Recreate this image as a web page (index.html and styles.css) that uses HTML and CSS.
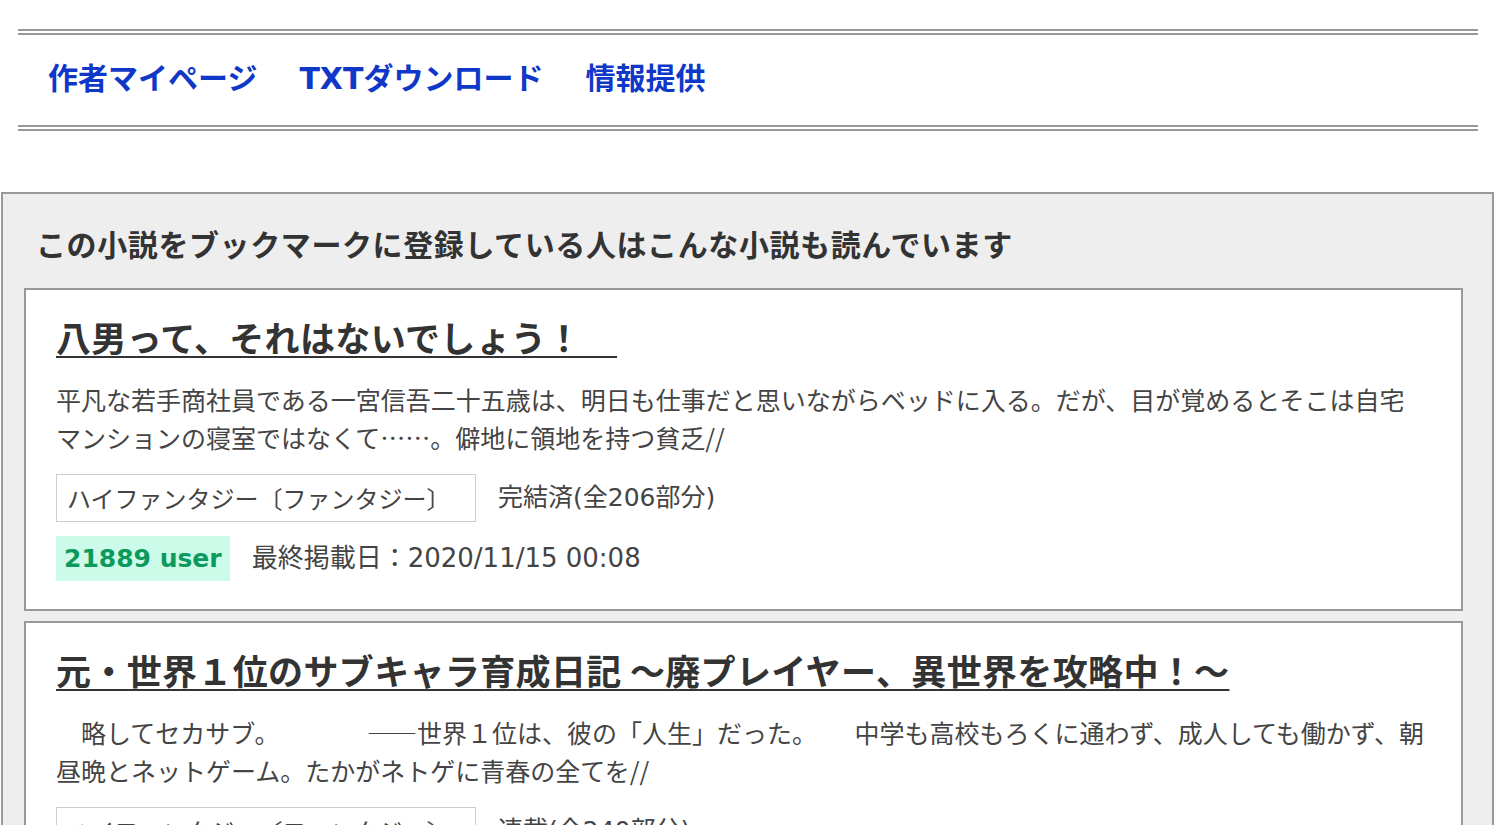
FILE: index.html
```html
<!DOCTYPE html>
<html lang="ja">
<head>
<meta charset="utf-8">
<title>この小説をブックマークに登録している人はこんな小説も読んでいます</title>
<link rel="stylesheet" href="styles.css">
</head>
<body>
<nav class="novel-nav">
  <a class="nav-link" href="#">作者マイページ</a>
  <a class="nav-link" href="#">TXTダウンロード</a>
  <a class="nav-link" href="#">情報提供</a>
</nav>

<section class="recommend">
  <h2 class="recommend-title">この小説をブックマークに登録している人はこんな小説も読んでいます</h2>

  <article class="novel-card">
    <a class="novel-title" href="#">八男って、それはないでしょう！　</a>
    <p class="novel-desc">平凡な若手商社員である一宮信吾二十五歳は、明日も仕事だと思いながらベッドに入る。だが、目が覚めるとそこは自宅<br>マンションの寝室ではなくて……。僻地に領地を持つ貧乏//</p>
    <div class="novel-meta">
      <span class="genre">ハイファンタジー〔ファンタジー〕</span>
      <span class="status">完結済(全206部分)</span>
    </div>
    <div class="novel-meta">
      <span class="users">21889 user</span>
      <span class="updated">最終掲載日：2020/11/15 00:08</span>
    </div>
  </article>

  <article class="novel-card">
    <a class="novel-title" href="#">元・世界１位のサブキャラ育成日記 ～廃プレイヤー、異世界を攻略中！～</a>
    <p class="novel-desc">　略してセカサブ。　　　　——世界１位は、彼の「人生」だった。　　中学も高校もろくに通わず、成人しても働かず、朝<br>昼晩とネットゲーム。たかがネトゲに青春の全てを//</p>
    <div class="novel-meta">
      <span class="genre">ハイファンタジー〔ファンタジー〕</span>
      <span class="status">連載(全240部分)</span>
    </div>
    <div class="novel-meta">
      <span class="users">4312 user</span>
      <span class="updated">最終掲載日：2020/11/14 18:00</span>
    </div>
  </article>
</section>
</body>
</html>
```

FILE: styles.css
```css
html, body {
  margin: 0;
  padding: 0;
  background: #fff;
  font-family: "Noto Sans CJK JP", "Noto Sans", sans-serif;
  color: #333;
}

.novel-nav {
  display: flex;
  align-items: center;
  gap: 42px;
  height: 88px;
  margin: 29px 19px 0 18px;
  padding: 0 0 2px 30px;
  box-sizing: content-box;
  border-top: 6px double #999;
  border-bottom: 6px double #999;
}

.nav-link {
  font-family: "DejaVu Sans", "Noto Sans CJK JP", sans-serif;
  font-size: 30px;
  font-weight: bold;
  color: #1038c8;
  text-decoration: none;
  line-height: 1;
}

.recommend {
  margin: 61px 3px 0 1px;
  padding: 29px 29px 40px 21px;
  background: #eee;
  border: 2px solid #999;
}

.recommend-title {
  margin: 0 0 25px 12px;
  font-size: 30px;
  letter-spacing: 0.6px;
  line-height: 40px;
  font-weight: bold;
  color: #333;
}

.novel-card {
  background: #fff;
  border: 2px solid #999;
  padding: 24px 20px 28px 30px;
  margin-bottom: 10px;
}

.novel-title {
  display: block;
  font-size: 35px;
  letter-spacing: 0.35px;
  line-height: 45px;
  font-weight: bold;
  color: #333;
  text-decoration: underline;
  text-decoration-thickness: 2px;
  text-underline-offset: 4px;
  white-space: nowrap;
}

.novel-desc {
  margin: 21px 0 18px 0;
  font-size: 25px;
  line-height: 38px;
  color: #444;
  white-space: nowrap;
}

.novel-meta {
  display: flex;
  align-items: center;
  gap: 22px;
  margin-bottom: 14px;
}

.novel-meta:last-child {
  margin-bottom: 0;
}

.genre {
  display: inline-block;
  min-width: 398px;
  padding: 5px 10px;
  border: 1px solid #ccc;
  font-size: 24px;
  line-height: 36px;
  color: #444;
}

.status {
  font-family: "DejaVu Sans", "Noto Sans CJK JP", sans-serif;
  font-size: 25px;
  line-height: 36px;
  color: #444;
}

.users {
  display: inline-block;
  padding: 4px 8px;
  background: #ccfbea;
  color: #0b9a5c;
  font-family: "DejaVu Sans", "Noto Sans CJK JP", sans-serif;
  font-size: 25px;
  font-weight: bold;
  line-height: 37px;
}

.updated {
  font-family: "DejaVu Sans", "Noto Sans CJK JP", sans-serif;
  font-size: 26px;
  line-height: 37px;
  color: #444;
}
```
